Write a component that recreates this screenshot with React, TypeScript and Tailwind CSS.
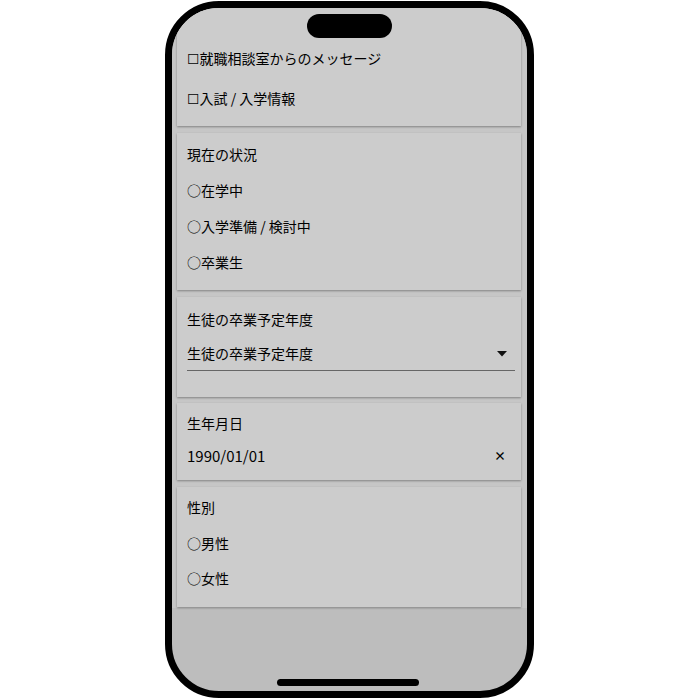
import React from "react";

const font = { fontFamily: '"Noto Sans CJK JP", "Noto Sans", "DejaVu Sans", sans-serif' };

function Row({ h, children }: { h: string; children: React.ReactNode }) {
  return <div className={`${h} flex items-center text-[14px] text-black`}>{children}</div>;
}

export default function App() {
  return (
    <div className="w-[700px] h-[700px] bg-white flex justify-center" style={font}>
      <div className="relative mt-[1px] ml-[-1px] w-[369px] h-[697px] rounded-[54px] border-[7px] border-black bg-[#bdbdbd] overflow-hidden">
        <div className="flex flex-col bg-[#c6c6c6] pl-[5px] pr-[6px] pb-[1px]">
          {/* card 1 */}
          <div className="h-[118px] bg-[#cccccc] shadow-[0_1px_2px_rgba(0,0,0,0.35)] pl-[10px] pt-[30px] flex flex-col">
            <Row h="h-[40px]">☐就職相談室からのメッセージ</Row>
            <Row h="h-[40px]">☐入試 / 入学情報</Row>
          </div>
          {/* card 2 */}
          <div className="mt-[7px] h-[157px] bg-[#cccccc] shadow-[0_1px_2px_rgba(0,0,0,0.35)] pl-[10px] pt-[3px] flex flex-col">
            <Row h="h-[36px]">現在の状況</Row>
            <Row h="h-[36px]">○在学中</Row>
            <Row h="h-[36px]">○入学準備 / 検討中</Row>
            <Row h="h-[36px]">○卒業生</Row>
          </div>
          {/* card 3 */}
          <div className="mt-[7px] h-[100px] bg-[#cccccc] shadow-[0_1px_2px_rgba(0,0,0,0.35)] pl-[10px] pr-[6px] pt-[4px] flex flex-col">
            <Row h="h-[36px]">生徒の卒業予定年度</Row>
            <div className="h-[34px] flex items-center justify-between border-b border-[#666] text-[14px] text-black">
              <span>生徒の卒業予定年度</span>
              <svg width="10" height="6" viewBox="0 0 10 6" className="mr-[8px]">
                <path d="M0 0 L10 0 L5 5.5 Z" fill="#111" />
              </svg>
            </div>
          </div>
          {/* card 4 */}
          <div className="mt-[6px] h-[77px] bg-[#cccccc] shadow-[0_1px_2px_rgba(0,0,0,0.35)] pl-[10px] pr-[6px] pt-[2px] flex flex-col">
            <Row h="h-[36px]">生年月日</Row>
            <div className="h-[30px] flex items-center justify-between text-black">
              <span className="text-[15px]">1990/01/01</span>
              <span className="mr-[9px] text-[12px] font-bold">×</span>
            </div>
          </div>
          {/* card 5 */}
          <div className="mt-[7px] h-[120px] bg-[#cccccc] shadow-[0_1px_2px_rgba(0,0,0,0.35)] pl-[10px] pt-[2px] flex flex-col">
            <Row h="h-[37px]">性別</Row>
            <Row h="h-[35px]">○男性</Row>
            <Row h="h-[35px]">○女性</Row>
          </div>
        </div>
        {/* notch */}
        <div className="absolute top-[6px] left-[135px] w-[85px] h-[24px] rounded-full bg-black" />
        {/* home bar */}
        <div className="absolute bottom-[5px] left-[105px] w-[142px] h-[7px] rounded-full bg-black" />
      </div>
    </div>
  );
}
